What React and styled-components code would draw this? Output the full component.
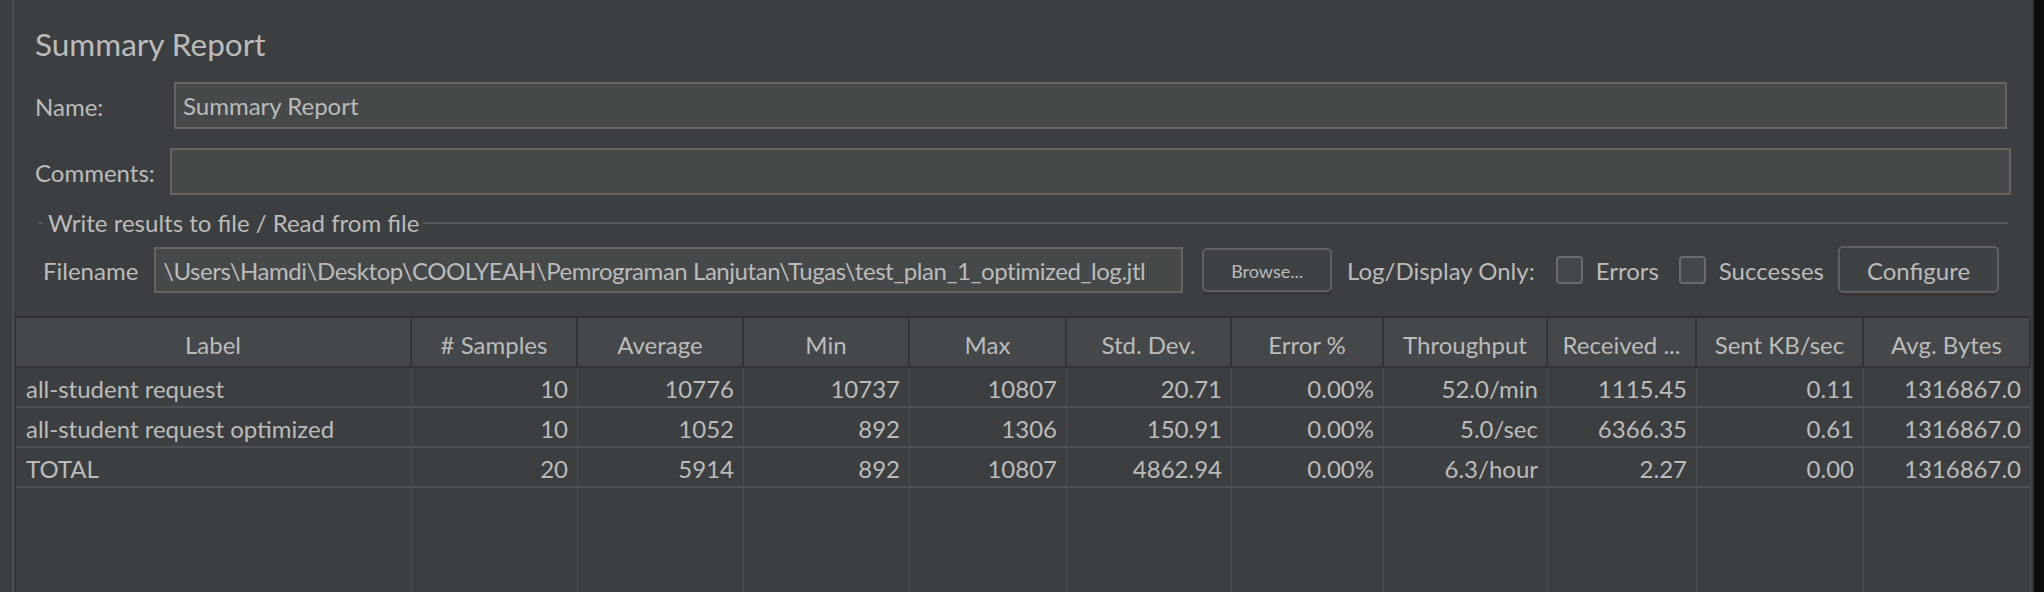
import React from 'react';
import styled, { createGlobalStyle } from 'styled-components';

const GlobalStyle = createGlobalStyle`
  html, body {
    margin: 0;
    padding: 0;
    background: #0c0c0c;
  }
  body {
    font-family: Lato, "Open Sans", "Liberation Sans", sans-serif;
    color: #bbbbbb;
  }
  * { box-sizing: border-box; }
`;

const Screen = styled.div`
  width: 2044px;
  height: 592px;
  overflow: hidden;
  background: #0c0c0c;
  display: flex;
`;

const Panel = styled.div`
  width: 2034px;
  height: 592px;
  background: #3c3f41;
  padding-left: 12px;
  border-right: 2px solid #313335;
  display: flex;
`;

const Content = styled.div`
  flex: 1;
  min-width: 0;
  border-left: 2px solid #4b4e51;
  display: flex;
  flex-direction: column;
`;

const Form = styled.div`
  padding-left: 21px;
  display: flex;
  flex-direction: column;
`;

const Title = styled.div`
  margin-top: 21px;
  font-size: 31.5px;
  line-height: 46px;
  height: 46px;
`;

const FieldRow = styled.div`
  display: flex;
  align-items: center;
  height: 47px;
  margin-top: ${p => p.$top}px;
  margin-right: ${p => p.$inset}px;
`;

const FieldLabel = styled.div`
  width: ${p => p.$width}px;
  flex: none;
  font-size: 24px;
  line-height: 30px;
  padding-top: 3px;
`;

const TextField = styled.div`
  flex: 1;
  height: ${p => p.$h || 47}px;
  background: #45494a;
  border: 2px solid #646464;
  padding: 3px 0 0 7px;
  font-size: 24px;
  line-height: 38px;
  letter-spacing: ${p => p.$tight ? '-0.45px' : 'normal'};
  white-space: nowrap;
  overflow: hidden;
  margin-right: ${p => p.$gap || 0}px;
`;

const Group = styled.div`
  margin: 14px 24px 0 3px;
  display: flex;
  flex-direction: column;
`;

const Legend = styled.div`
  display: flex;
  align-items: center;
  height: 28px;
  font-size: 24px;
  line-height: 28px;
  white-space: nowrap;

  &::before {
    content: '';
    width: 5px;
    height: 2px;
    background: #55585a;
    margin-right: 5px;
  }
  &::after {
    content: '';
    flex: 1;
    height: 2px;
    background: #55585a;
    margin-left: 4px;
  }
`;

const FileRow = styled.div`
  display: flex;
  align-items: center;
  height: 47px;
  margin-top: 9px;
  padding: 0 9px 0 5px;
`;

const Text = styled.span`
  font-size: 24px;
  line-height: 30px;
  padding-top: 3px;
  white-space: nowrap;
  margin-right: ${p => p.$gap || 0}px;
`;

const Button = styled.button`
  flex: none;
  width: ${p => p.$w}px;
  height: ${p => p.$h}px;
  margin-right: ${p => p.$gap || 0}px;
  background: #3e4244;
  border: 2px solid #5e6061;
  border-radius: 5px;
  box-shadow: 0 3px 0 #343638;
  color: #bbbbbb;
  font-family: inherit;
  font-size: ${p => p.$fs}px;
  padding: 2px 0 0;
  cursor: pointer;
`;

const CheckBox = styled.span`
  flex: none;
  width: 27px;
  height: 28px;
  margin-right: 13px;
  background: #43494a;
  border: 2px solid #6a6b6c;
  border-radius: 4px;
`;

const Table = styled.div`
  flex: 1;
  margin: 23px 2px 0 1px;
  border-top: 2px solid #2e3032;
  border-left: 1px solid #2e3032;
  display: flex;
  flex-direction: column;
  font-size: 24px;
`;

const GridRow = styled.div`
  display: grid;
  grid-template-columns: ${p => p.$cols};
  flex: ${p => (p.$fill ? 1 : 'none')};
`;

const HeadCell = styled.div`
  height: 50px;
  background: #45484a;
  border-right: 2px solid #323436;
  border-bottom: 2px solid #323436;
  display: flex;
  align-items: center;
  justify-content: center;
  padding-top: 4px;
  white-space: nowrap;
  overflow: hidden;
`;

const Cell = styled.div`
  height: ${p => (p.$fill ? 'auto' : '40px')};
  border-right: 1px solid #4b4e50;
  border-bottom: ${p => (p.$fill ? 'none' : '2px solid #4f5254')};
  display: flex;
  align-items: center;
  justify-content: ${p => (p.$align === 'left' ? 'flex-start' : 'flex-end')};
  padding: 3px 9px 0 10px;
  white-space: nowrap;
  overflow: hidden;
`;

const columns = [
  { title: 'Label', width: 396, align: 'left' },
  { title: '# Samples', width: 166 },
  { title: 'Average', width: 166 },
  { title: 'Min', width: 166 },
  { title: 'Max', width: 157 },
  { title: 'Std. Dev.', width: 165 },
  { title: 'Error %', width: 152 },
  { title: 'Throughput', width: 164 },
  { title: 'Received ...', width: 149 },
  { title: 'Sent KB/sec', width: 167 },
  { title: 'Avg. Bytes', width: 167 },
];

const rows = [
  ['all-student request', '10', '10776', '10737', '10807', '20.71', '0.00%', '52.0/min', '1115.45', '0.11', '1316867.0'],
  ['all-student request optimized', '10', '1052', '892', '1306', '150.91', '0.00%', '5.0/sec', '6366.35', '0.61', '1316867.0'],
  ['TOTAL', '20', '5914', '892', '10807', '4862.94', '0.00%', '6.3/hour', '2.27', '0.00', '1316867.0'],
];

const template = columns.map(c => `${c.width}px`).join(' ');

export default function App() {
  return (
    <Screen>
      <GlobalStyle />
      <Panel>
        <Content>
          <Form>
            <Title>Summary Report</Title>
            <FieldRow $top={15} $inset={25}>
              <FieldLabel $width={139}>Name:</FieldLabel>
              <TextField>Summary Report</TextField>
            </FieldRow>
            <FieldRow $top={19} $inset={21}>
              <FieldLabel $width={135}>Comments:</FieldLabel>
              <TextField />
            </FieldRow>
            <Group>
              <Legend>Write results to file / Read from file</Legend>
              <FileRow>
                <Text $gap={16}>Filename</Text>
                <TextField $h={46} $gap={19} $tight>
                  \Users\Hamdi\Desktop\COOLYEAH\Pemrograman Lanjutan\Tugas\test_plan_1_optimized_log.jtl
                </TextField>
                <Button $w={130} $h={44} $fs={18} $gap={15}>Browse...</Button>
                <Text $gap={21}>Log/Display Only:</Text>
                <CheckBox />
                <Text $gap={20}>Errors</Text>
                <CheckBox />
                <Text $gap={14}>Successes</Text>
                <Button $w={161} $h={47} $fs={24}>Configure</Button>
              </FileRow>
            </Group>
          </Form>
          <Table>
            <GridRow $cols={template}>
              {columns.map(c => (
                <HeadCell key={c.title}>{c.title}</HeadCell>
              ))}
            </GridRow>
            {rows.map(r => (
              <GridRow key={r[0]} $cols={template}>
                {r.map((v, i) => (
                  <Cell key={i} $align={columns[i].align}>{v}</Cell>
                ))}
              </GridRow>
            ))}
            <GridRow $cols={template} $fill>
              {columns.map(c => (
                <Cell key={c.title} $fill />
              ))}
            </GridRow>
          </Table>
        </Content>
      </Panel>
    </Screen>
  );
}
